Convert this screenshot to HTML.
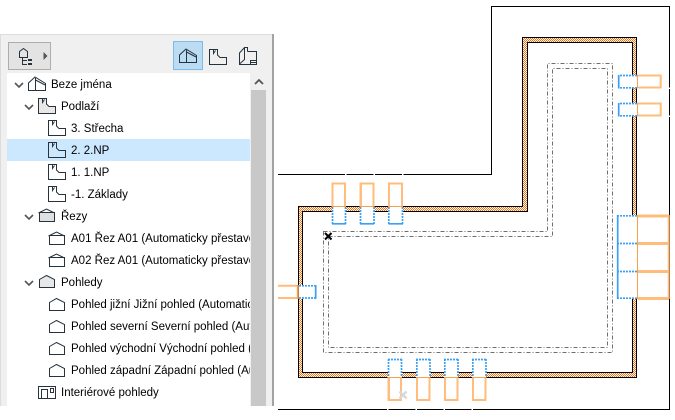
<!DOCTYPE html>
<html><head><meta charset="utf-8">
<style>
html,body{margin:0;padding:0;background:#fff;}
body{width:675px;height:420px;position:relative;overflow:hidden;font-family:"Liberation Sans",sans-serif;}
#panel{position:absolute;left:0;top:34px;width:272px;height:372px;background:#f0f0f0;border-top:1px solid #dcdcdc;box-sizing:border-box;}
#rline{position:absolute;left:272px;top:34px;width:2px;height:372px;background:#a3a3a3;}
#lline{position:absolute;left:0;top:34px;width:1px;height:372px;background:#dcdcdc;}
#tree{position:absolute;left:7px;top:73px;width:243px;height:333px;background:#fff;overflow:hidden;}
#sel{position:absolute;left:0;top:66px;width:243px;height:22px;background:#cce8ff;}
.t{position:absolute;font-size:11.5px;line-height:22px;height:22px;margin-top:1px;white-space:nowrap;color:#000;}
#thumb{position:absolute;left:251px;top:90px;width:15px;height:316px;background:#c8c8c8;}
#btn{position:absolute;left:8px;top:42px;width:41px;height:26px;background:#e3e3e3;border:1px solid #adadad;}
#act{position:absolute;left:173px;top:41px;width:28px;height:27px;background:#bcdcf4;border:1px solid #7cbcec;}
svg{position:absolute;left:0;top:0;}
</style></head><body>
<div id="panel"></div><div id="lline"></div><div id="rline"></div>
<div id="btn"></div><div id="act"></div>
<div id="tree"><div id="sel"></div>
<div class="t" style="left:44px;top:0">Beze jména</div>
<div class="t" style="left:54px;top:22px">Podlaží</div>
<div class="t" style="left:64px;top:44px">3. Střecha</div>
<div class="t" style="left:64px;top:66px">2. 2.NP</div>
<div class="t" style="left:64px;top:88px">1. 1.NP</div>
<div class="t" style="left:64px;top:110px">-1. Základy</div>
<div class="t" style="left:54px;top:132px">Řezy</div>
<div class="t" style="left:64px;top:154px">A01 Řez A01 (Automaticky přestavovat)</div>
<div class="t" style="left:64px;top:176px">A02 Řez A01 (Automaticky přestavovat)</div>
<div class="t" style="left:54px;top:198px">Pohledy</div>
<div class="t" style="left:64px;top:220px">Pohled jižní Jižní pohled (Automaticky)</div>
<div class="t" style="left:64px;top:242px">Pohled severní Severní pohled (Automaticky)</div>
<div class="t" style="left:64px;top:264px">Pohled východní Východní pohled (Automaticky)</div>
<div class="t" style="left:64px;top:286px">Pohled západní Západní pohled (Automaticky)</div>
<div class="t" style="left:54px;top:308px">Interiérové pohledy</div>
</div>
<div id="thumb"></div>
<svg width="675" height="420" viewBox="0 0 675 420" xmlns="http://www.w3.org/2000/svg">
<defs>
<pattern id="h" width="2" height="2" patternUnits="userSpaceOnUse">
<rect width="2" height="2" fill="#fff"/><rect width="1" height="1" fill="#f5700f"/><rect x="1" y="1" width="1" height="1" fill="#f5700f"/>
</pattern>
<g id="floor" fill="none" stroke="#26323c" stroke-width="1"><path d="M.5 .5H8.5V6L11 8.5H17.5V15.5H.5Z"/><path d="M4.5 1V4.5L6.5 1.5"/></g>
<g id="floorf" stroke="#26323c" stroke-width="1"><path d="M.5 .5H8.5V6L11 8.5H17.5V15.5H.5Z" fill="#e8e8e8"/><path d="M4.5 1V4.5L6.5 1.5" fill="none"/></g>
<g id="sec" fill="none" stroke="#26323c" stroke-width="1"><path d="M.5 5L8.5 1L16.5 5"/><rect x="1.5" y="4.5" width="15" height="9"/></g>
<g id="secf" stroke="#26323c" stroke-width="1"><path d="M.5 5L8.5 1L16.5 5" fill="none"/><rect x="1.5" y="4.5" width="15" height="9" fill="#e0e0e0"/></g>
<g id="view" fill="none" stroke="#26323c" stroke-width="1"><path d="M1.5 13.5V5.5L8.5 1.5L16.5 5.5V13.5Z"/></g>
<g id="viewf" stroke="#26323c" stroke-width="1"><path d="M1.5 13.5V5.5L8.5 1.5L16.5 5.5V13.5Z" fill="#e8e8e8"/></g>
<g id="house" fill="none" stroke="#26323c" stroke-width="1"><path d="M.5 14.5V7L7 1L17.5 7.5V14.5Z"/><path d="M7.5 14.5V2M7.5 4L17 9"/></g>
<path id="chev" d="M0 0L4 4L8 0" fill="none" stroke="#555" stroke-width="1.6"/>
</defs>

<!-- toolbar icons -->
<g fill="none" stroke="#26323c" stroke-width="1">
<path d="M19.5 57.5V51.5L23.5 48.5L27.5 51.5V57.5Z" fill="#e3e3e3"/>
<path d="M22.5 57.5V64.5H27"/>
<path d="M22.5 60.5H27"/>
</g>
<rect x="28" y="59" width="4" height="2" fill="#26323c"/><rect x="28" y="63" width="4" height="2" fill="#26323c"/>
<path d="M43.5 52L47.5 56L43.5 60Z" fill="#555"/>
<use href="#house" x="179" y="48"/>
<use href="#floor" x="209" y="49"/>
<g fill="none" stroke="#26323c" stroke-width="1">
<path d="M247.5 51.5H256.5V64.5H239.5V53L244.5 47.5H247.5V51.5"/>
<path d="M244.5 48V59.5L239.5 64"/>
<path d="M250.5 64V60.5H256.5M250.5 62.5H256.5"/>
</g>
<!-- scrollbar arrow -->
<path d="M255 84L259 80L263 84" fill="none" stroke="#555" stroke-width="1.8"/>

<!-- tree chevrons -->
<use href="#chev" x="15" y="83"/>
<use href="#chev" x="25" y="105"/>
<use href="#chev" x="25" y="215"/>
<use href="#chev" x="25" y="281"/>

<!-- tree icons -->
<use href="#house" x="28" y="76"/>
<use href="#floorf" x="38" y="98"/>
<use href="#floor" x="48" y="120"/>
<use href="#floor" x="48" y="142"/>
<use href="#floor" x="48" y="164"/>
<use href="#floor" x="48" y="186"/>
<use href="#secf" x="38" y="208"/>
<use href="#sec" x="48" y="231"/>
<use href="#sec" x="48" y="253"/>
<use href="#viewf" x="38" y="274"/>
<use href="#view" x="48" y="297"/>
<use href="#view" x="48" y="319"/>
<use href="#view" x="48" y="341"/>
<use href="#view" x="48" y="363"/>
<g fill="none" stroke="#26323c" stroke-width="1">
<rect x="38.5" y="386.5" width="17" height="12"/><path d="M41.5 398V389.5H47.5V398"/><rect x="50.5" y="388.5" width="3" height="4"/>
</g>

<!-- outer contour -->
<path d="M278 174.5H491.5V6.5H669.5V409.5H278" fill="none" stroke="#000" stroke-width="1"/>

<!-- walls -->
<path fill-rule="evenodd" fill="url(#h)" shape-rendering="crispEdges" d="M298 206H522V37H637V378H298Z M303 212H528V43H633V373H303Z"/>
<path fill="none" stroke="#000" stroke-width="1" shape-rendering="crispEdges" d="M298.5 206.5H522.5V37.5H636.5V377.5H298.5Z M302.5 211.5H527.5V42.5H632.5V372.5H302.5Z"/>

<!-- finish dotted -->
<g fill="none" stroke="#6e6e6e" stroke-width="1" stroke-dasharray="4 2 1 2">
<path d="M323.5 231.5H547.5V63.5H612.5V352.5H323.5Z"/>
<path d="M328.5 236.5H552.5V68.5H607.5V347.5H328.5Z"/>
</g>

<!-- window openings -->
<g fill="#fff" stroke="none">
<rect x="618" y="75" width="44" height="13"/><rect x="618" y="103" width="44" height="13"/>
<rect x="617" y="215" width="52" height="84"/>
<rect x="299" y="285" width="17" height="14"/><rect x="278" y="285" width="20" height="14"/>
<rect x="332" y="183" width="14" height="41"/><rect x="360" y="183" width="14" height="41"/><rect x="388" y="183" width="14" height="41"/>
<rect x="388" y="359" width="14" height="41"/><rect x="416" y="359" width="14" height="41"/><rect x="444" y="359" width="14" height="41"/><rect x="472" y="359" width="14" height="41"/>
</g>
<!-- line gaps -->
<g fill="#fff"><rect x="345" y="173" width="1.5" height="3"/><rect x="373.5" y="173" width="1.5" height="3"/><rect x="402" y="173" width="1.5" height="3"/>
<rect x="387" y="408" width="1.5" height="3"/><rect x="415.5" y="408" width="1.5" height="3"/><rect x="443.5" y="408" width="1.5" height="3"/><rect x="471.5" y="408" width="1.5" height="3"/>
<rect x="668" y="87.5" width="3" height="1.5"/><rect x="668" y="115.5" width="3" height="1.5"/></g>

<!-- blue reveals -->
<g fill="none" stroke="#3aa0f5" stroke-width="1.7">
<g stroke-dasharray="2 1">
<path d="M637 75.5H619M637 87.8H619M637 103.5H619M637 115.8H619"/>
<path d="M637 215.8H617.5M637 243.5H617.5M637 271.5H617.5M637 298.2H617.5"/>
<path d="M332.5 207V224M345.5 207V224M360.5 207V224M374 207V224M388.8 207V224M402.5 207V224"/>
<path d="M299 285.8H316M388.5 359V377M401.5 359V377M416.8 359V377M430 359V377M444.8 359V377M458 359V377M472.8 359V377M486 359V377"/>
<path d="M299 298H316"/>
<path d="M388 359.5H402M416 359.5H430M444 359.5H458M472 359.5H486"/>
</g>
<path d="M618.7 75V88.5M618.7 103V116.5M617.7 215V299M315.7 285V298.7"/>
<path d="M332 223.8H346M360 223.8H374M388.5 223.8H403"/>
</g>

<!-- orange frames -->
<g fill="none" stroke="#ffbc7a">
<path stroke-width="2" d="M637 75.5H660.7V87.5H637M637 103.5H660.7V115.5H637"/>
<path stroke-width="3" d="M638 216H669M638 243.5H669M638 271.5H669M638 298.5H669"/>
<path stroke-width="2" d="M668.7 215V299"/>
<path stroke-width="2" d="M278 285.7H297M278 298H297"/>
<path stroke-width="2" d="M332.5 207V183.5H345V207M360.5 207V183.5H373.5V207M389 207V183.5H402V207"/>
<path stroke-width="1" d="M361.5 184V207"/>
<path stroke-width="2" d="M388.5 377V400H401V377M417 377V400H429.5V377M445 377V400H457.5V377M473 377V400H485.5V377"/>
<path stroke-width="1" d="M389.5 377V399"/>
</g>
<g fill="none" stroke="#f9a04a">
<path stroke-width="1" d="M637.5 75V88M637.5 103V116M637.5 215V299"/>
<path stroke-width="2" d="M297.8 285V299"/>
<path stroke-width="1" d="M332 206.5H346M360 206.5H374M388 206.5H403M388 377.5H402M416 377.5H430M444 377.5H458M472 377.5H486"/>
</g>

<!-- markers -->
<path d="M325 233L331.5 239.5M331.5 233L325 239.5" stroke="#000" stroke-width="2" fill="none"/>
<path d="M399.5 391.5L406.5 398.5M406.5 391.5L399.5 398.5" stroke="#d8d8d8" stroke-width="2.4" fill="none"/>
</svg>
</body></html>
